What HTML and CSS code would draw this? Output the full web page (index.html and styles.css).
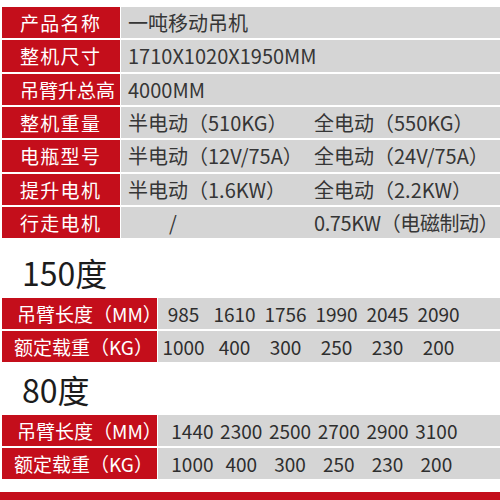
FILE: index.html
```html
<!DOCTYPE html>
<html lang="zh-CN">
<head>
<meta charset="utf-8">
<link rel="stylesheet" href="styles.css">
</head>
<body>
<div class="page">
  <div class="spec">
    <div class="row"><div class="lab four">产品名称</div><div class="val">一吨移动吊机</div></div>
    <div class="row"><div class="lab four">整机尺寸</div><div class="val">1710X1020X1950MM</div></div>
    <div class="row"><div class="lab">吊臂升总高</div><div class="val">4000MM</div></div>
    <div class="row"><div class="lab four">整机重量</div><div class="val"><span class="c1">半电动（510KG）</span><span>全电动（550KG）</span></div></div>
    <div class="row"><div class="lab four">电瓶型号</div><div class="val"><span class="c1">半电动（12V/75A）</span><span>全电动（24V/75A）</span></div></div>
    <div class="row"><div class="lab four">提升电机</div><div class="val"><span class="c1">半电动（1.6KW）</span><span>全电动（2.2KW）</span></div></div>
    <div class="row"><div class="lab four">行走电机</div><div class="val"><span class="c1"><span class="slash">/</span></span><span class="tight">0.75KW（电磁制动）</span></div></div>
  </div>

  <h2 class="angle first">150度</h2>
  <div class="load">
    <div class="lrow"><div class="llab">吊臂长度（MM）</div><div class="nums"><span>985</span><span>1610</span><span>1756</span><span>1990</span><span>2045</span><span>2090</span></div></div>
    <div class="lrow"><div class="llab kg">额定载重（KG）</div><div class="nums"><span>1000</span><span>400</span><span>300</span><span>250</span><span>230</span><span>200</span></div></div>
  </div>

  <h2 class="angle second">80度</h2>
  <div class="load narrow">
    <div class="lrow"><div class="llab">吊臂长度（MM）</div><div class="nums"><span>1440</span><span>2300</span><span>2500</span><span>2700</span><span>2900</span><span>3100</span></div></div>
    <div class="lrow"><div class="llab kg">额定载重（KG）</div><div class="nums"><span>1000</span><span>400</span><span>300</span><span>250</span><span>230</span><span>200</span></div></div>
  </div>
</div>
<div class="bottombar"></div>
</body>
</html>
```

FILE: styles.css
```css
html, body {
  margin: 0;
  padding: 0;
  background: #ffffff;
  font-family: "Noto Sans CJK SC", "Noto Sans", sans-serif;
  overflow: hidden;
}

.page {
  padding: 7px 0 0 2px;
}

.spec {
  display: flex;
  flex-direction: column;
  gap: 2px;
}

.row {
  display: grid;
  grid-template-columns: 118px 1fr;
  column-gap: 1px;
  height: 31.33px;
}

.lab {
  background: #c40e1b;
  color: #ffffff;
  font-size: 19px;
  display: flex;
  align-items: center;
  padding-left: 18px;
  white-space: nowrap;
}

.lab.four {
  letter-spacing: 1.3px;
}

.val {
  background: #d5d5d5;
  color: #363636;
  font-size: 20px;
  display: flex;
  align-items: center;
  padding-left: 7px;
  white-space: nowrap;
}

.c1 {
  width: 186px;
  flex: none;
}

.tight {
  letter-spacing: -0.4px;
}

.slash {
  margin-left: 41px;
}

.angle {
  margin: 0;
  font-size: 32px;
  font-weight: 400;
  line-height: 38px;
  color: #1c1c1c;
  padding-left: 20px;
}

.angle.first {
  margin-top: 15px;
  margin-bottom: 6.5px;
}

.angle.second {
  margin-top: 8px;
  margin-bottom: 7px;
}

.load {
  display: flex;
  flex-direction: column;
  gap: 2px;
}

.lrow {
  display: grid;
  grid-template-columns: 155px 1fr;
  column-gap: 1px;
  height: 31px;
}

.llab {
  background: #c40e1b;
  color: #ffffff;
  font-size: 19px;
  display: flex;
  align-items: center;
  padding-left: 15px;
  white-space: nowrap;
}

.llab.kg {
  padding-left: 12px;
}

.nums {
  background: #d5d5d5;
  color: #2e2e2e;
  font-size: 19px;
  display: flex;
  align-items: center;
}

.nums span {
  width: 51px;
  text-align: center;
  flex: none;
}

.narrow .nums {
  padding-left: 10px;
}

.narrow .nums span {
  width: 48.8px;
}

.bottombar {
  margin-top: 13px;
  height: 20px;
  background: #c40e1b;
}
```
